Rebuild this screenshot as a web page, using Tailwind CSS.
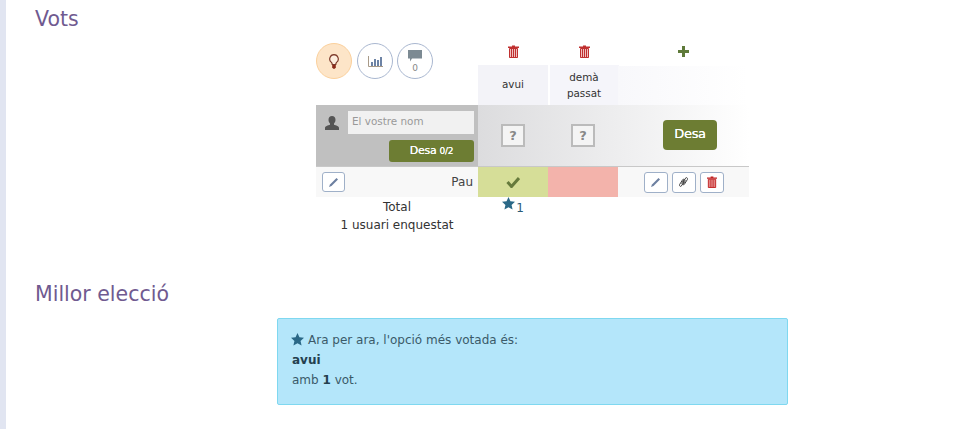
<!doctype html>
<html lang="ca">
  <head>
    <meta charset="UTF-8" />
    <script src="https://cdn.jsdelivr.net/npm/@tailwindcss/browser@4"></script>
    <title>Vots</title>
  </head>
  <body class="bg-white overflow-hidden">
    <div class="h-[429px] border-l-[6px] border-[#e1e5f1] font-['DejaVu_Sans',sans-serif] text-[#333] pl-[29px]">
      <h2 class="h-[36px] pt-[6px] text-[20.5px] leading-[26px] text-[#705a90]">Vots</h2>

      <div class="ml-[281px] w-[433px] text-[12px]">
        <!-- header row -->
        <div class="grid grid-cols-[162px_71px_70px_130px] h-[69px]">
          <div class="flex pt-[7px]">
            <div class="w-[36px] h-[36px] rounded-full bg-[#fde5c8] border border-[#fbd09c] flex items-center justify-center">
              <svg class="w-[10px] h-[15px]" viewBox="0 0 10 15"><path d="M5 .7a4.300 4.300 0 0 0-2.600 7.700c.6.6.8 1.300.8 2.100h3.600c0-.8.2-1.500.8-2.100A4.300 4.300 0 0 0 5 .7z" fill="#fdeedd" stroke="#7d3a2a" stroke-width="1.200"/><path d="M3.200 11h3.600v2.500l-1 1.300H4.200l-1-1.300z" fill="#8a2a1a"/></svg>
            </div>
            <div class="ml-[5px] w-[36px] h-[36px] rounded-full border border-[#a9b7d0] flex items-center justify-center">
              <svg class="w-[15px] h-[11px]" viewBox="0 0 15 11"><path d="M.5 0v10.500H15" fill="none" stroke="#a89a88" stroke-width="1"/><path d="M3 6h2v4H3zM6 3h2v7H6zM9 4h2v6H9zM12 1h2v9h-2z" fill="#6d83a5"/></svg>
            </div>
            <div class="ml-[4px] w-[36px] h-[36px] rounded-full border border-[#a9b7d0] flex flex-col items-center pt-[6px]">
              <svg class="w-[14px] h-[12px]" viewBox="0 0 14 12"><path d="M0 0h14v8.500H4L2 11.500v-3H0z" fill="#7c8a93"/></svg>
              <span class="text-[9px] leading-[12px] text-[#888]">0</span>
            </div>
          </div>
          <div class="flex flex-col items-center pr-[1px]">
            <div class="h-[29px] pt-[9px] flex justify-center"><svg class="w-[11px] h-[13px]" viewBox="0 0 11 13"><path d="M4 1.500V.5h3v1h4v1.500H0V1.500z" fill="#c03030"/><path d="M1 3.500h9V13H1z" fill="#f0c0c0"/><path d="M1.500 3.500h8V12.500h-8zM3.500 4v8.500M5.500 4v8.500M7.500 4v8.500" fill="none" stroke="#c03030" stroke-width="1"/></svg></div>
            <div class="w-[70px] h-[40px] bg-[#f3f3f8] flex items-center justify-center text-[10.4px] text-[#333]">avui</div>
          </div>
          <div class="flex flex-col items-center">
            <div class="h-[29px] pt-[9px] flex justify-center"><svg class="w-[11px] h-[13px]" viewBox="0 0 11 13"><path d="M4 1.500V.5h3v1h4v1.500H0V1.500z" fill="#c03030"/><path d="M1 3.500h9V13H1z" fill="#f0c0c0"/><path d="M1.500 3.500h8V12.500h-8zM3.500 4v8.500M5.500 4v8.500M7.500 4v8.500" fill="none" stroke="#c03030" stroke-width="1"/></svg></div>
            <div class="w-[69px] h-[40px] bg-[#f5f5fa] flex items-center justify-center text-center text-[10.4px] leading-[16px] text-[#333]">demà<br />passat</div>
          </div>
          <div class="flex flex-col items-center pr-[2px]">
            <div class="h-[30px] pt-[10px] flex justify-center"><svg class="w-[11px] h-[11px]" viewBox="0 0 11 11"><path d="M4 0h3v4h4v3H7v4H4V7H0V4h4z" fill="#5f7a3a"/></svg></div>
            <div class="w-[130px] h-[39px] bg-gradient-to-r from-[#f8f8fb] to-white"></div>
          </div>
        </div>

        <!-- new vote row -->
        <div class="grid grid-cols-[162px_271px] h-[61px]">
          <div class="bg-[#c0c0c0] pl-[9px] pr-[4px] pt-[6px]">
            <div class="flex items-center gap-[9px]">
              <svg class="w-[14px] h-[14px] shrink-0" viewBox="0 0 14 14"><path d="M7 0c2.200 0 3.500 1.700 3.500 3.800 0 1.600-.7 3-1.500 3.800v1.200c2 .6 5 1.500 5 3.200v2H0v-2c0-1.700 3-2.600 5-3.200V7.600C4.200 6.800 3.500 5.400 3.500 3.800 3.500 1.700 4.800 0 7 0z" fill="#555"/></svg>
              <div class="w-[126px] h-[23px] bg-[#f1f1f1] pl-[4px] text-[10.4px] leading-[21px] text-[#999]">El vostre nom</div>
            </div>
            <div class="flex justify-end mt-[6px]">
              <div class="w-[85px] h-[22px] rounded-[3px] bg-[#6d7d33] text-white text-[11px] leading-[21px] text-center tracking-[-0.3px] [text-shadow:0_0_0.5px_#fff]">Desa <span class="text-[9px]">0/2</span></div>
            </div>
          </div>
          <div class="bg-gradient-to-r from-[#dcdcde] to-white grid grid-cols-[70px_70px_131px] pb-[1px] items-center">
            <div class="flex justify-center"><div class="w-[24px] h-[23px] border-2 border-[#bbb] bg-[#f4f4f4] text-center text-[13px] leading-[19px] font-bold text-[#888]">?</div></div>
            <div class="flex justify-center"><div class="w-[24px] h-[23px] border-2 border-[#bbb] bg-[#f4f4f4] text-center text-[13px] leading-[19px] font-bold text-[#888]">?</div></div>
            <div class="flex justify-center pl-[13px]"><div class="w-[54px] h-[30px] rounded-[4px] bg-[#6d7d33] text-white text-[13px] leading-[28px] text-center tracking-[-0.3px] [text-shadow:0_0_0.5px_#fff]">Desa</div></div>
          </div>
        </div>

        <!-- voter row -->
        <div class="grid grid-cols-[162px_70px_70px_131px] h-[31px] border-t border-[#c8c8c8] bg-[#f8f8f8]">
          <div class="flex items-center justify-between pl-[6px] pr-[5px]">
            <div class="w-[23px] h-[20px] rounded-[3px] border border-[#9fb0c8] bg-white flex items-center justify-center">
              <svg class="w-[11px] h-[11px]" viewBox="0 0 11 11"><path d="M8.500 1l1.500 1.500L3.500 9 1 10l1-2.500z" fill="#6c7fa0"/></svg>
            </div>
            <span class="text-[12px] text-[#444]">Pau</span>
          </div>
          <div class="bg-[#d6de98] flex items-center justify-center">
            <svg class="w-[14px] h-[12px]" viewBox="0 0 14 12"><path d="M1.500 6l4 4.500L13 2" fill="none" stroke="#667a3c" stroke-width="3"/></svg>
          </div>
          <div class="bg-[#f3b3ab]"></div>
          <div class="flex items-center justify-center gap-[4px]">
            <div class="w-[24px] h-[21px] rounded-[3px] border border-[#9fb0c8] bg-white flex items-center justify-center">
              <svg class="w-[11px] h-[11px]" viewBox="0 0 11 11"><path d="M8.500 1l1.500 1.500L3.500 9 1 10l1-2.500z" fill="#6c7fa0"/></svg>
            </div>
            <div class="w-[24px] h-[21px] rounded-[3px] border border-[#9fb0c8] bg-white flex items-center justify-center">
              <svg class="w-[9px] h-[12px]" viewBox="0 0 9 12"><path d="M3.800 6.500L6.800 1.800a1.200 1.200 0 0 1 1.700 1.500L5.300 8.400a1.500 1.500 0 0 1-2.300-1.700l2-3.200M5.200 5.500L2.200 10.200A1.200 1.200 0 0 1 .5 8.700L3.700 3.600a1.500 1.500 0 0 1 2.300 1.700L4 8.500" fill="none" stroke="#444" stroke-width="1"/></svg>
            </div>
            <div class="w-[24px] h-[21px] rounded-[3px] border border-[#9fb0c8] bg-white flex items-center justify-center">
              <svg class="w-[10px] h-[12px]" viewBox="0 0 11 13"><path d="M4 1.500V.5h3v1h4v1.500H0V1.500z" fill="#c02020"/><path d="M1 3.500h9V13H1z" fill="#f0b0b0"/><path d="M1.500 3.500h8V12.500h-8zM3.500 4v8.500M5.500 4v8.500M7.500 4v8.500" fill="none" stroke="#c02020" stroke-width="1"/></svg>
            </div>
          </div>
        </div>

        <!-- total -->
        <div class="grid grid-cols-[162px_70px] text-[12px] leading-[18px] text-[#333]">
          <div class="text-center pt-[1px]">
            <div>Total</div>
            <div>1 usuari enquestat</div>
          </div>
          <div class="flex justify-center items-start">
            <svg class="w-[13px] h-[13px] mr-[1px]" viewBox="0 0 14 14"><path d="M7 0l2.100 4.700 4.900.5-3.700 3.300 1.100 5L7 11l-4.400 2.500 1.100-5L0 5.200l4.900-.5z" fill="#2a6887"/></svg>
            <span class="pt-[2px] text-[#2a5a75]">1</span>
          </div>
        </div>
      </div>

      <h2 class="mt-[47px] text-[20.5px] leading-[26px] text-[#705a90]">Millor elecció</h2>

      <div class="ml-[242px] mt-[11px] w-[511px] h-[87px] rounded-[2px] border border-[#7fd8f0] bg-[#b4e6fa] pl-[14px] pt-[11px] text-[12px] leading-[20px] text-[#3a5a69]">
        <div class="flex items-center gap-[4px]">
          <svg class="w-[13px] h-[13px] -mt-[2px] -ml-[1px]" viewBox="0 0 14 14"><path d="M7 0l2.100 4.700 4.900.5-3.700 3.300 1.100 5L7 11l-4.400 2.500 1.100-5L0 5.200l4.900-.5z" fill="#2a6887"/></svg>
          <span>Ara per ara, l'opció més votada és:</span>
        </div>
        <div class="font-bold text-[#24404e]">avui</div>
        <div>amb <b class="text-[#24404e]">1</b> vot.</div>
      </div>
    </div>
  </body>
</html>
